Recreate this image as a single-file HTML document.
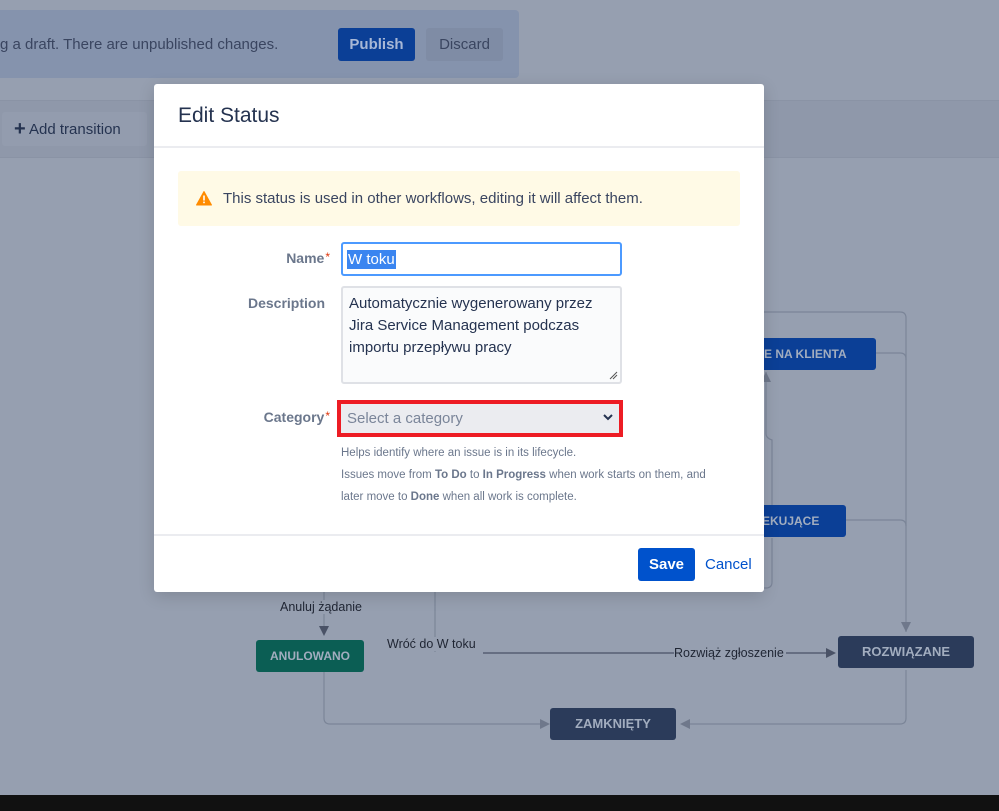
<!DOCTYPE html>
<html><head><meta charset="utf-8"><style>
*{box-sizing:border-box;margin:0;padding:0}
body{width:999px;height:811px;overflow:hidden;background:#969fb0;font-family:"Liberation Sans",sans-serif;position:relative;color:#172b4d}
.abs{position:absolute}
.banner{left:-10px;top:10px;width:529px;height:68px;background:#8593ad;border-radius:4px}
.btn{position:absolute;height:33px;border-radius:3px;font-size:15px;line-height:33px;text-align:center}
.node{position:absolute;color:#a2adbf;font-weight:bold;font-size:12px;text-align:center;border-radius:3px}
.lbl{position:absolute;font-size:12.5px;color:#1f2533;background:#969fb0;line-height:14px}
.modal{left:154px;top:84px;width:610px;height:508px;background:#fff;border-radius:3px;box-shadow:0 4px 16px rgba(0,0,0,.15)}
.label{position:absolute;right:0;font-size:14px;color:#6b778c;font-weight:bold;text-align:right}
.req{color:#de350b;font-weight:normal;font-size:12px;vertical-align:top;margin-left:1px}
</style></head><body>
<div class="abs banner"></div>
<div class="abs" style="left:0;top:36px;font-size:15px;color:#3a4560">g a draft. There are unpublished changes.</div>
<div class="btn" style="left:338px;top:28px;width:77px;background:#0b3f96;color:#a8b8d6;font-weight:bold">Publish</div>
<div class="btn" style="left:426px;top:28px;width:77px;background:#7f8ca5;color:#3a4560">Discard</div>
<div class="abs" style="left:0;top:100px;width:999px;height:58px;background:#8f98aa;border-top:1px solid #8a93a5;border-bottom:1px solid #8a93a5"></div>
<div class="abs" style="left:2px;top:112px;width:145px;height:34px;background:#939cae;border-radius:3px;font-size:15px;line-height:34px;padding-left:12px;color:#253350"><b style="font-size:20px;vertical-align:-1px">+</b> Add transition</div>

<svg class="abs" style="left:0;top:0" width="999" height="811">
<g fill="none" stroke="#7b8598" stroke-width="1.2">
<path d="M760 312 H900 Q906 312 906 318 V632"/>
<path d="M876 353 H900 Q906 353 906 359 V360"/>
<path d="M846 520 H900 Q906 520 906 526"/>
<path d="M906 670 V718 Q906 724 900 724 H684"/>
<path d="M324 672 V718 Q324 724 330 724 H544"/>
<path d="M324 592 V628"/>
<path d="M435 592 V652"/>
<path d="M483 653 H828" stroke="#4a5266"/>
<path d="M766 372 V434 Q766 438 772 440 V505"/>
<path d="M772 538 V582 Q772 588 766 588 H764"/>
<path d="M760 318 V340"/>
</g>
<g fill="#6f788b">
<path d="M901 622 L911 622 L906 632Z"/>
<path d="M319 626 L329 626 L324 636Z" fill="#4a5266"/>
<path d="M826 648 L836 653 L826 658Z" fill="#4a5266"/>
<path d="M540 719 L550 724 L540 729Z"/>
<path d="M690 719 L680 724 L690 729Z"/>
<path d="M761 382 L771 382 L766 372Z"/>
</g>
</svg>
<div class="node" style="left:700px;top:338px;width:176px;height:32px;line-height:32px;background:#0b3f96;padding-left:64px;text-align:left">E NA KLIENTA</div>
<div class="node" style="left:700px;top:505px;width:146px;height:32px;line-height:32px;background:#0b3f96;padding-left:62px;text-align:left">EKUJĄCE</div>
<div class="node" style="left:256px;top:640px;width:108px;height:32px;line-height:32px;background:#0b5e54">ANULOWANO</div>
<div class="node" style="left:838px;top:636px;width:136px;height:32px;line-height:32px;background:#2b3b5a;font-size:13px">ROZWIĄZANE</div>
<div class="node" style="left:550px;top:708px;width:126px;height:32px;line-height:32px;background:#2b3b5a;font-size:13px">ZAMKNIĘTY</div>
<div class="lbl" style="left:280px;top:600px">Anuluj żądanie</div>
<div class="lbl" style="left:387px;top:637px">Wróć do W toku</div>
<div class="lbl" style="left:674px;top:646px;padding-right:2px">Rozwiąż zgłoszenie</div>
<div class="abs" style="left:0;top:795px;width:999px;height:16px;background:#111"></div>

<div class="abs modal">
<div class="abs" style="left:24px;top:20px;font-size:21px;color:#253350">Edit Status</div>
<div class="abs" style="left:0;top:62px;width:610px;height:2px;background:#ebecf0"></div>
<div class="abs" style="left:24px;top:87px;width:562px;height:55px;background:#fffae6;border-radius:3px"></div>
<svg class="abs" style="left:42px;top:107px" width="16" height="15"><path d="M8 0.5 L15.5 14 H0.5Z" fill="#ff8b00" stroke="#ff8b00" stroke-linejoin="round"/><rect x="7.2" y="4.5" width="1.6" height="5" fill="#fff"/><rect x="7.2" y="10.6" width="1.6" height="1.6" fill="#fff"/></svg>
<div class="abs" style="left:69px;top:106px;font-size:15px;color:#3a4560">This status is used in other workflows, editing it will affect them.</div>
<div class="abs" style="left:0;top:166px;width:176px;height:20px"><div class="label" style="top:0">Name<span class="req">*</span></div></div>
<div class="abs" style="left:187px;top:158px;width:281px;height:34px;border:2px solid #4c9aff;border-radius:3px;background:#fff"><span style="position:absolute;left:4px;top:6px;background:#3a85f0;color:#fff;font-size:15px;line-height:19px;padding:0 1px">W toku</span></div>
<div class="abs" style="left:0;top:211px;width:171px"><div class="label">Description</div></div>
<div class="abs" style="left:187px;top:202px;width:281px;height:98px;border:2px solid #dfe1e6;border-radius:3px;background:#fafbfc;padding:5px 6px;font-size:15px;line-height:22px;color:#253350">Automatycznie wygenerowany przez Jira Service Management podczas importu przepływu pracy<svg style="position:absolute;right:2px;bottom:2px" width="10" height="10"><path d="M9 2 L2 9 M9 5 L5 9" stroke="#555" stroke-width="1"/></svg></div>
<div class="abs" style="left:0;top:325px;width:176px"><div class="label">Category<span class="req">*</span></div></div>
<div class="abs" style="left:183px;top:316px;width:286px;height:37px;border:4px solid #ed1c24;background:#ebecf0;font-size:15px;color:#7a8599;padding:6px 6px">Select a category<svg style="position:absolute;right:6px;top:9px" width="10" height="8"><path d="M1 2 L5 6 L9 2" fill="none" stroke="#253350" stroke-width="2"/></svg></div>
<div class="abs" style="left:187px;top:358px;font-size:11.5px;line-height:22px;color:#6b778c">Helps identify where an issue is in its lifecycle.<br>Issues move from <b>To Do</b> to <b>In Progress</b> when work starts on them, and<br>later move to <b>Done</b> when all work is complete.</div>
<div class="abs" style="left:0;top:450px;width:610px;height:2px;background:#ebecf0"></div>
<div class="btn" style="left:484px;top:464px;width:57px;background:#0052cc;color:#fff;font-weight:bold">Save</div>
<div class="abs" style="left:551px;top:472px;font-size:15px;color:#0052cc">Cancel</div>
</div>
</body></html>
